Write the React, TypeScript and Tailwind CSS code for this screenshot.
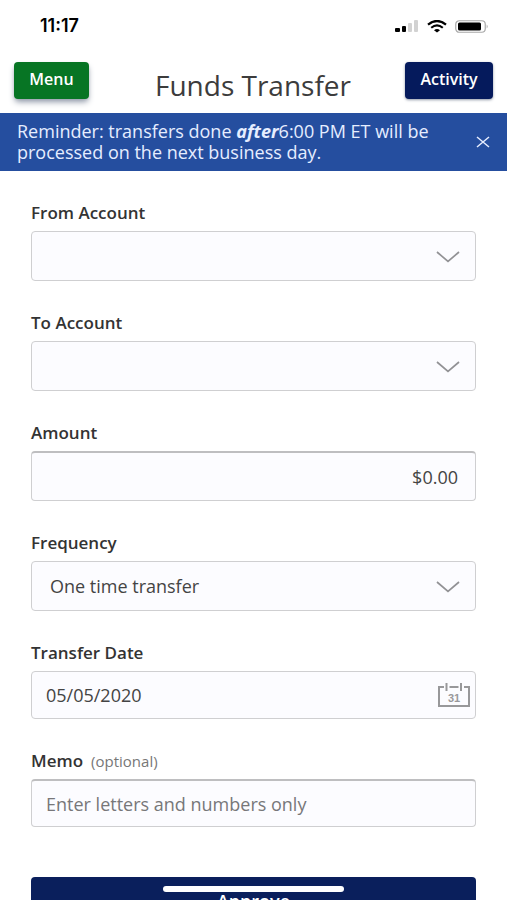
import { useState } from 'react'
import type { ReactNode } from 'react'

const box =
    'block w-full rounded border border-[#cfcfd1] bg-[#fcfcff] text-lg text-[#444444] outline-none'

const StatusBar = () => (
    <div className="flex h-[52px] shrink-0 items-center justify-between pl-10 pr-[18px] text-black">
        <span className="font-['Inter'] text-lg font-semibold">11:17</span>
        <div className="flex items-center gap-2">
            <svg width="24" height="13" viewBox="0 0 24 13" aria-hidden="true">
                <rect x="0" y="8" width="5" height="4" rx="1" />
                <rect x="7" y="6" width="4" height="6" rx="1" />
                <rect x="13" y="3" width="4" height="9" rx="1" fill="#d2d2d2" />
                <rect x="19" y="0" width="4" height="12" rx="1" fill="#d2d2d2" />
            </svg>
            <svg width="20" height="13" viewBox="0 0 20 13" fill="none" aria-hidden="true">
                <path d="M1 4.6Q10-2.6 19 4.6" stroke="#000" strokeWidth="2.3" />
                <path d="M4.2 7.8Q10 3 15.8 7.8" stroke="#000" strokeWidth="2.1" />
                <path d="M7 10.2Q10 7.6 13 10.2L10 12.6Z" fill="#000" />
            </svg>
            <svg width="34" height="13" viewBox="0 0 34 13" fill="none" aria-hidden="true">
                <rect x="0.75" y="0.75" width="29.5" height="11.5" rx="3.5" stroke="#a9a9a9" strokeWidth="1.2" />
                <rect x="3" y="2.5" width="23" height="8" rx="1.5" fill="#000" />
                <path d="M31.7 4.5q2 2 0 4z" fill="#a9a9a9" />
            </svg>
        </div>
    </div>
)

const Header = () => (
    <header className="flex h-[61px] shrink-0 items-start justify-between px-3.5 pt-2.5">
        <button
            type="button"
            className="h-[37px] w-[75px] rounded bg-[#077524] pb-1 text-base font-semibold text-white shadow-md shadow-gray-400"
        >
            Menu
        </button>
        <h1 className="pt-1 pl-3 text-[28px] leading-[38px] text-[#3c3c3c]">Funds Transfer</h1>
        <button
            type="button"
            className="h-[37px] w-[88px] rounded bg-[#051a5c] pb-1 text-base font-semibold text-white shadow-sm shadow-gray-400"
        >
            Activity
        </button>
    </header>
)

const Reminder = ({ onClose }: { onClose: () => void }) => (
    <div className="flex shrink-0 items-center justify-between bg-[#254e9f] pt-2 pr-[15px] pb-2 pl-[17px] text-[#e6edff]">
        <p className="text-lg leading-[21px]">
            Reminder: transfers done <em className="font-bold">after</em>6:00 PM ET will be
            processed on the next business day.
        </p>
        <button type="button" aria-label="Dismiss" className="p-0.5" onClick={onClose}>
            <svg width="14" height="14" viewBox="0 0 14 14" fill="none" aria-hidden="true">
                <path d="M1 2l12 10M13 2L1 12" stroke="currentColor" strokeWidth="1.5" />
            </svg>
        </button>
    </div>
)

const Field = ({
    id,
    title,
    note,
    children
}: {
    id: string
    title: string
    note?: string
    children: ReactNode
}) => (
    <div>
        <label htmlFor={id} className="mb-1.5 block text-[17px] leading-6 font-semibold text-[#333333]">
            {title}
            {note && <span className="ml-2 text-[15px] font-normal text-[#777777]">{note}</span>}
        </label>
        <div className="relative">{children}</div>
    </div>
)

const Select = ({ id, options }: { id: string; options: string[] }) => (
    <>
        <select id={id} className={`${box} h-[50px] appearance-none pr-12 pl-[18px]`}>
            {options.map((option) => (
                <option key={option}>{option}</option>
            ))}
        </select>
        <svg
            className="pointer-events-none absolute top-5 right-4"
            width="24"
            height="12"
            viewBox="0 0 24 12"
            fill="none"
            aria-hidden="true"
        >
            <path d="M1 1l11 9.5L23 1" stroke="#929295" strokeWidth="1.7" />
        </svg>
    </>
)

const App = () => {
    let [reminder, setReminder] = useState(true)

    return (
        <div className="flex h-screen flex-col overflow-hidden bg-white font-['Open_Sans','Noto_Sans',sans-serif]">
            <StatusBar />
            <Header />
            {reminder && <Reminder onClose={() => setReminder(false)} />}

            <main className="min-h-0 flex-1 overflow-y-auto [scrollbar-width:none]">
                <form className="flex flex-col gap-[30px] px-[31px] pt-[30px] pb-12">
                    <Field id="from" title="From Account">
                        <Select id="from" options={['']} />
                    </Field>
                    <Field id="to" title="To Account">
                        <Select id="to" options={['']} />
                    </Field>
                    <Field id="amount" title="Amount">
                        <input
                            id="amount"
                            type="text"
                            inputMode="decimal"
                            defaultValue="$0.00"
                            className={`${box} h-[50px] border-t-2 border-t-[#bebec0] px-[17px] text-right`}
                        />
                    </Field>
                    <Field id="frequency" title="Frequency">
                        <Select id="frequency" options={['One time transfer', 'Weekly', 'Monthly']} />
                    </Field>
                    <Field id="date" title="Transfer Date">
                        <input
                            id="date"
                            type="text"
                            defaultValue="05/05/2020"
                            className={`${box} h-12 pr-12 pl-3.5`}
                        />
                        <button
                            type="button"
                            aria-label="Choose a date"
                            className="absolute top-3 right-[5px]"
                        >
                            <svg width="34" height="25" viewBox="0 0 34 25" fill="none" aria-hidden="true">
                                <path
                                    d="M7 4H2v19h30V4h-5M12.5 4h9M9.5 0v8M24 0v8"
                                    stroke="#98989a"
                                    strokeWidth="2"
                                />
                                <text
                                    x="17"
                                    y="19"
                                    textAnchor="middle"
                                    fontSize="11"
                                    fontWeight="700"
                                    fill="#98989a"
                                    fontFamily="Liberation Sans, sans-serif"
                                >
                                    31
                                </text>
                            </svg>
                        </button>
                    </Field>
                    <Field id="memo" title="Memo" note="(optional)">
                        <input
                            id="memo"
                            type="text"
                            placeholder="Enter letters and numbers only"
                            className={`${box} h-12 border-t-2 border-t-[#bebec0] px-3.5 placeholder:text-[#777779]`}
                        />
                    </Field>
                    <button
                        type="submit"
                        className="mt-5 h-12 shrink-0 rounded bg-[#0a1f5c] text-lg font-semibold text-white"
                    >
                        Approve
                    </button>
                </form>
            </main>

            <div className="pointer-events-none fixed inset-x-0 bottom-2 flex justify-center">
                <div className="h-1.5 w-[181px] rounded-full bg-white" />
            </div>
        </div>
    )
}

export default App
